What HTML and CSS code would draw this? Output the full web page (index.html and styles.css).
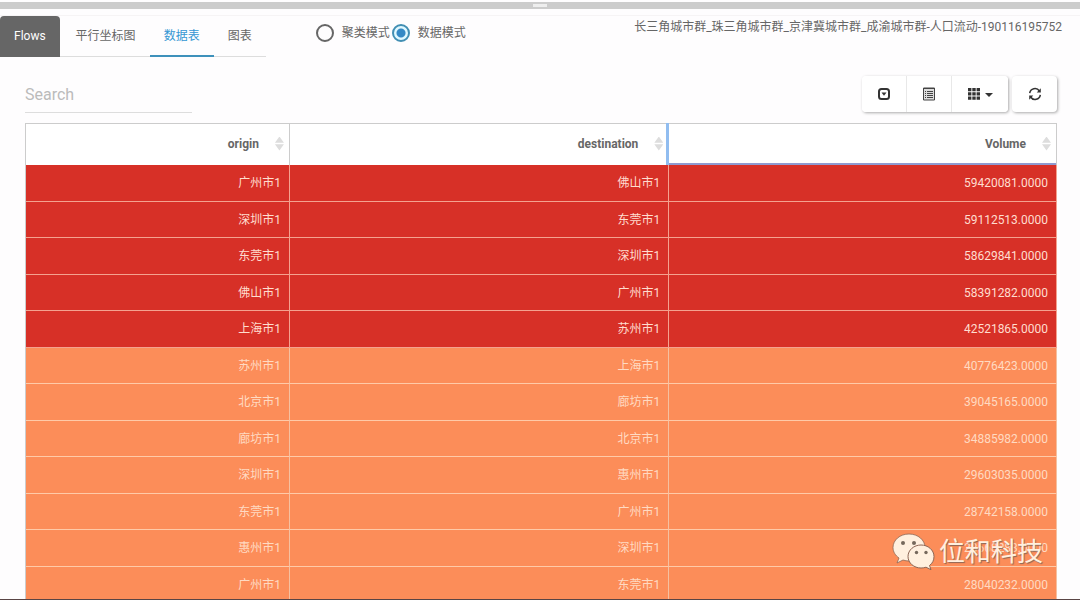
FILE: index.html
```html
<!DOCTYPE html>
<html lang="zh-CN">
<head>
<meta charset="utf-8">
<title>Flows</title>
<link rel="stylesheet" href="styles.css">
</head>
<body>
<div class="splitter"><span class="splitter-grip"></span></div>
<main class="panel">
  <header class="topbar">
    <nav class="tabs">
      <a class="tab tab-title" href="#flows">Flows</a>
      <a class="tab" href="#parallel">平行坐标图</a>
      <a class="tab tab-active" href="#table" aria-current="page">数据表</a>
      <a class="tab" href="#chart">图表</a>
    </nav>
    <div class="modes">
      <label class="mode"><input type="radio" name="mode">聚类模式</label>
      <label class="mode"><input type="radio" name="mode" checked>数据模式</label>
    </div>
    <div class="dataset">长三角城市群_珠三角城市群_京津冀城市群_成渝城市群-人口流动-190116195752</div>
  </header>
  <section class="content">
    <div class="tools">
      <input class="search" type="text" placeholder="Search" aria-label="Search">
      <div class="buttons">
        <div class="button-group">
          <button class="tool" type="button" aria-label="Pagination"><svg width="14" height="14" viewBox="0 0 14 14"><rect x="2" y="2" width="10" height="10" rx="2.500" fill="none" stroke="#333" stroke-width="2"/><path d="M4.5 5.5h5L7 8.8z" fill="#333"/></svg></button>
          <button class="tool" type="button" aria-label="Toggle view"><svg width="14" height="14" viewBox="0 0 14 14"><path d="M1.5 1h11v12h-11z" fill="#ddd" stroke="#444"/><path d="M1 1.5h12M3 4.5h1M5 4.5h6M3 6.5h1M5 6.5h6M3 8.5h1M5 8.5h6M3 10.5h1M5 10.5h6" stroke="#444" fill="none"/></svg></button>
          <button class="tool tool-wide" type="button" aria-label="Columns"><svg width="26" height="14" viewBox="0 0 26 14"><path d="M1 1h3.4v3.2H1zM5.3 1h3.4v3.2H5.3zM9.6 1H13v3.2H9.6zM1 5.3h3.4v3.2H1zM5.3 5.3h3.4v3.2H5.3zM9.6 5.3H13v3.2H9.6zM1 9.6h3.4v3.2H1zM5.3 9.6h3.4v3.2H5.3zM9.6 9.6H13v3.2H9.6zM18 6h8l-4 4z" fill="#333"/></svg></button>
        </div>
        <button class="tool tool-single" type="button" aria-label="Refresh"><svg width="14" height="14" viewBox="0 0 14 14" fill="none" stroke="#333" stroke-width="1.5"><path d="M1.7 6.2A5.3 5.3 0 0 1 11.400 4M12.3 7.8A5.3 5.3 0 0 1 2.6 10"/><path d="M12.8 1.300v4.200H8.700zM1.200 12.700V8.5h4.100z" fill="#333" stroke="none"/></svg></button>
      </div>
    </div>
    <table class="flows">
      <colgroup><col class="col-origin"><col class="col-destination"><col></colgroup>
      <thead>
        <tr><th><span class="sort">origin</span></th><th><span class="sort">destination</span></th><th class="focused"><span class="sort">Volume</span></th></tr>
      </thead>
      <tbody>
        <tr class="high"><td>广州市1</td><td>佛山市1</td><td>59420081.0000</td></tr>
        <tr class="high"><td>深圳市1</td><td>东莞市1</td><td>59112513.0000</td></tr>
        <tr class="high"><td>东莞市1</td><td>深圳市1</td><td>58629841.0000</td></tr>
        <tr class="high"><td>佛山市1</td><td>广州市1</td><td>58391282.0000</td></tr>
        <tr class="high"><td>上海市1</td><td>苏州市1</td><td>42521865.0000</td></tr>
        <tr><td>苏州市1</td><td>上海市1</td><td>40776423.0000</td></tr>
        <tr><td>北京市1</td><td>廊坊市1</td><td>39045165.0000</td></tr>
        <tr><td>廊坊市1</td><td>北京市1</td><td>34885982.0000</td></tr>
        <tr><td>深圳市1</td><td>惠州市1</td><td>29603035.0000</td></tr>
        <tr><td>东莞市1</td><td>广州市1</td><td>28742158.0000</td></tr>
        <tr><td>惠州市1</td><td>深圳市1</td><td>28568283.0000</td></tr>
        <tr><td>广州市1</td><td>东莞市1</td><td>28040232.0000</td></tr>
      </tbody>
    </table>
  </section>
</main>
<div class="watermark">
  <svg width="44" height="38" viewBox="0 0 44 38"><path d="M17 1C8 1 1 7 1 14.500c0 4.500 2.500 8 6 10.500l-2 5 6-3c2 .7 4 1 6 1 9 0 16-6 16-13.500S26 1 17 1z" fill="#fff0df" stroke="#8d6756" stroke-width=".8"/><path d="M29 12c-7 0-13 5-13 11.500S22 35 29 35c2 0 3.500-.3 5-.8l5 2.500-1.500-4.200c3-2.200 4.500-5.300 4.500-9C42 17 36 12 29 12z" fill="#fff0df" stroke="#8d6756"/><g fill="#75685c"><circle cx="11" cy="10" r="2"/><circle cx="22" cy="10" r="2"/><circle cx="24.500" cy="19.500" r="1.700"/><circle cx="34" cy="19.500" r="1.700"/></g></svg>
  <span>位和科技</span>
</div>
<div class="bottom-edge"></div>
</body>
</html>
```
FILE: styles.css
```css
* { box-sizing: border-box; }
body {
  margin: 0;
  height: 100vh;
  overflow: hidden;
  background: #fefdfe;
  color: #666;
  font: 12px/18px Roboto, "Noto Sans CJK SC", sans-serif;
}
.splitter {
  display: flex;
  justify-content: center;
  align-items: center;
  height: 7px;
  margin-top: 2px;
  background: #ccc;
}
.splitter-grip { width: 14px; height: 3px; background: #eee; }
.panel { margin-top: 6px; border-top: 1px solid #f6f4f5; }
.topbar { display: flex; align-items: flex-start; }
.tabs { display: flex; }
.tab {
  height: 41px;
  padding: 11px 14px;
  border-bottom: 1px solid #ddd;
  color: #666;
  text-decoration: none;
}
.tab-title {
  border-radius: 4px 4px 0 0;
  border-color: #666;
  background: #666;
  color: #fff;
}
.tab-title + .tab { padding-left: 16px; }
.tab-active { border-bottom: 2px solid #3e91bb; color: #3597d3; }
.modes { display: flex; gap: 2px; margin: 8px 0 0 50px; }
.mode { display: flex; align-items: center; gap: 8px; line-height: 16px; }
.mode input {
  appearance: none;
  width: 18px;
  height: 18px;
  margin: 0;
  border: 2px solid #666;
  border-radius: 50%;
}
.mode input:checked {
  border-color: #428fb3;
  background: radial-gradient(circle, #3589c5 4px, #dff8ff 5px);
}
.dataset { margin: 2px 18px 0 auto; white-space: nowrap; }
.content { padding: 19px 23px 0 25px; }
.tools { display: flex; justify-content: space-between; }
.search {
  width: 167px;
  height: 37px;
  padding: 0;
  border: 0;
  border-bottom: 1px solid #ddd;
  outline: 0;
  background: transparent;
  color: #666;
  font: 16px/24px Roboto, sans-serif;
}
.search::placeholder { color: #bbb; }
.buttons { display: flex; gap: 4px; height: 36px; }
.button-group { display: flex; border-radius: 4px; box-shadow: 1px 1px 3px #aaa; }
.tool {
  display: flex;
  align-items: center;
  justify-content: center;
  width: 45px;
  height: 36px;
  padding: 0;
  border: 0;
  border-right: 1px solid #e8e8e8;
  background: #fff;
}
.tool:first-child { border-radius: 4px 0 0 4px; }
.tool-wide { width: 56px; border: 0; border-radius: 0 4px 4px 0; }
.tool-single { border: 0; border-radius: 4px; box-shadow: 1px 1px 3px #aaa; }
.flows {
  width: 100%;
  margin-top: 10px;
  table-layout: fixed;
  border-collapse: separate;
  border-spacing: 0;
  border-left: 1px solid #ccc;
}
.col-origin { width: 25.6%; }
.col-destination { width: 36.8%; }
.flows th {
  height: 42px;
  padding: 0 5px 2px;
  border-top: 1px solid #ccc;
  border-right: 1px solid #ccc;
  background: #fff;
  text-align: right;
}
.flows th.focused { box-shadow: inset 0 -2px #8f9ad0, -3px 0 #91bdf0; }
.sort { display: flex; align-items: center; justify-content: flex-end; gap: 16px; }
.sort::after {
  content: "";
  width: 9px;
  height: 14px;
  background: #ddd;
  clip-path: polygon(50% 0, 100% 45%, 0 45%, 0 55%, 100% 55%, 50% 100%, 0 55%, 0 45%);
}
.flows td {
  height: 36px;
  padding: 0 8px;
  border-right: 1px solid #f5c0a0;
  border-bottom: 1px solid #ffcaa8;
  background: #fc8d59;
  color: #ffdac2;
  text-align: right;
}
.flows tr:nth-child(odd) td { height: 37px; }
.flows .high td { border-color: #f4a28f; background: #d73027; color: #ffddcf; }
.watermark {
  position: absolute;
  right: 37px;
  bottom: 29px;
  display: flex;
  align-items: center;
  gap: 3px;
  color: #fff0df;
  font-size: 26px;
  line-height: 38px;
  text-shadow: 1px 1px 1px #8d6756;
}
.bottom-edge { position: absolute; right: 0; bottom: 0; left: 0; height: 1px; background: #594444; }
```
